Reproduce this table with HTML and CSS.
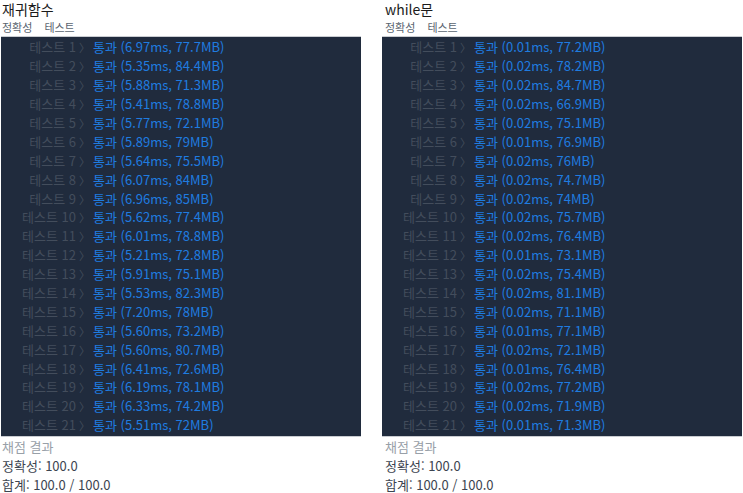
FILE: index.html
```html
<!DOCTYPE html>
<html lang="ko">
<head>
<meta charset="utf-8">
<link rel="stylesheet" href="styles.css">
</head>
<body>
<div class="page">
  <section class="col">
    <h1 class="title">재귀함수</h1>
    <div class="tabs"><span>정확성</span><span>테스트</span></div>
    <div class="console">
      <div class="row"><span class="lbl">테스트 1</span><span class="chev">〉</span><span class="pass">통과 (6.97ms, 77.7MB)</span></div>
      <div class="row"><span class="lbl">테스트 2</span><span class="chev">〉</span><span class="pass">통과 (5.35ms, 84.4MB)</span></div>
      <div class="row"><span class="lbl">테스트 3</span><span class="chev">〉</span><span class="pass">통과 (5.88ms, 71.3MB)</span></div>
      <div class="row"><span class="lbl">테스트 4</span><span class="chev">〉</span><span class="pass">통과 (5.41ms, 78.8MB)</span></div>
      <div class="row"><span class="lbl">테스트 5</span><span class="chev">〉</span><span class="pass">통과 (5.77ms, 72.1MB)</span></div>
      <div class="row"><span class="lbl">테스트 6</span><span class="chev">〉</span><span class="pass">통과 (5.89ms, 79MB)</span></div>
      <div class="row"><span class="lbl">테스트 7</span><span class="chev">〉</span><span class="pass">통과 (5.64ms, 75.5MB)</span></div>
      <div class="row"><span class="lbl">테스트 8</span><span class="chev">〉</span><span class="pass">통과 (6.07ms, 84MB)</span></div>
      <div class="row"><span class="lbl">테스트 9</span><span class="chev">〉</span><span class="pass">통과 (6.96ms, 85MB)</span></div>
      <div class="row"><span class="lbl">테스트 10</span><span class="chev">〉</span><span class="pass">통과 (5.62ms, 77.4MB)</span></div>
      <div class="row"><span class="lbl">테스트 11</span><span class="chev">〉</span><span class="pass">통과 (6.01ms, 78.8MB)</span></div>
      <div class="row"><span class="lbl">테스트 12</span><span class="chev">〉</span><span class="pass">통과 (5.21ms, 72.8MB)</span></div>
      <div class="row"><span class="lbl">테스트 13</span><span class="chev">〉</span><span class="pass">통과 (5.91ms, 75.1MB)</span></div>
      <div class="row"><span class="lbl">테스트 14</span><span class="chev">〉</span><span class="pass">통과 (5.53ms, 82.3MB)</span></div>
      <div class="row"><span class="lbl">테스트 15</span><span class="chev">〉</span><span class="pass">통과 (7.20ms, 78MB)</span></div>
      <div class="row"><span class="lbl">테스트 16</span><span class="chev">〉</span><span class="pass">통과 (5.60ms, 73.2MB)</span></div>
      <div class="row"><span class="lbl">테스트 17</span><span class="chev">〉</span><span class="pass">통과 (5.60ms, 80.7MB)</span></div>
      <div class="row"><span class="lbl">테스트 18</span><span class="chev">〉</span><span class="pass">통과 (6.41ms, 72.6MB)</span></div>
      <div class="row"><span class="lbl">테스트 19</span><span class="chev">〉</span><span class="pass">통과 (6.19ms, 78.1MB)</span></div>
      <div class="row"><span class="lbl">테스트 20</span><span class="chev">〉</span><span class="pass">통과 (6.33ms, 74.2MB)</span></div>
      <div class="row"><span class="lbl">테스트 21</span><span class="chev">〉</span><span class="pass">통과 (5.51ms, 72MB)</span></div>
    </div>
    <div class="result">
      <p class="res-head">채점 결과</p>
      <p>정확성: 100.0</p>
      <p>합계: 100.0 / 100.0</p>
    </div>
  </section>
  <section class="col col-right">
    <h1 class="title">while문</h1>
    <div class="tabs"><span>정확성</span><span>테스트</span></div>
    <div class="console">
      <div class="row"><span class="lbl">테스트 1</span><span class="chev">〉</span><span class="pass">통과 (0.01ms, 77.2MB)</span></div>
      <div class="row"><span class="lbl">테스트 2</span><span class="chev">〉</span><span class="pass">통과 (0.02ms, 78.2MB)</span></div>
      <div class="row"><span class="lbl">테스트 3</span><span class="chev">〉</span><span class="pass">통과 (0.02ms, 84.7MB)</span></div>
      <div class="row"><span class="lbl">테스트 4</span><span class="chev">〉</span><span class="pass">통과 (0.02ms, 66.9MB)</span></div>
      <div class="row"><span class="lbl">테스트 5</span><span class="chev">〉</span><span class="pass">통과 (0.02ms, 75.1MB)</span></div>
      <div class="row"><span class="lbl">테스트 6</span><span class="chev">〉</span><span class="pass">통과 (0.01ms, 76.9MB)</span></div>
      <div class="row"><span class="lbl">테스트 7</span><span class="chev">〉</span><span class="pass">통과 (0.02ms, 76MB)</span></div>
      <div class="row"><span class="lbl">테스트 8</span><span class="chev">〉</span><span class="pass">통과 (0.02ms, 74.7MB)</span></div>
      <div class="row"><span class="lbl">테스트 9</span><span class="chev">〉</span><span class="pass">통과 (0.02ms, 74MB)</span></div>
      <div class="row"><span class="lbl">테스트 10</span><span class="chev">〉</span><span class="pass">통과 (0.02ms, 75.7MB)</span></div>
      <div class="row"><span class="lbl">테스트 11</span><span class="chev">〉</span><span class="pass">통과 (0.02ms, 76.4MB)</span></div>
      <div class="row"><span class="lbl">테스트 12</span><span class="chev">〉</span><span class="pass">통과 (0.01ms, 73.1MB)</span></div>
      <div class="row"><span class="lbl">테스트 13</span><span class="chev">〉</span><span class="pass">통과 (0.02ms, 75.4MB)</span></div>
      <div class="row"><span class="lbl">테스트 14</span><span class="chev">〉</span><span class="pass">통과 (0.02ms, 81.1MB)</span></div>
      <div class="row"><span class="lbl">테스트 15</span><span class="chev">〉</span><span class="pass">통과 (0.02ms, 71.1MB)</span></div>
      <div class="row"><span class="lbl">테스트 16</span><span class="chev">〉</span><span class="pass">통과 (0.01ms, 77.1MB)</span></div>
      <div class="row"><span class="lbl">테스트 17</span><span class="chev">〉</span><span class="pass">통과 (0.02ms, 72.1MB)</span></div>
      <div class="row"><span class="lbl">테스트 18</span><span class="chev">〉</span><span class="pass">통과 (0.01ms, 76.4MB)</span></div>
      <div class="row"><span class="lbl">테스트 19</span><span class="chev">〉</span><span class="pass">통과 (0.02ms, 77.2MB)</span></div>
      <div class="row"><span class="lbl">테스트 20</span><span class="chev">〉</span><span class="pass">통과 (0.02ms, 71.9MB)</span></div>
      <div class="row"><span class="lbl">테스트 21</span><span class="chev">〉</span><span class="pass">통과 (0.01ms, 71.3MB)</span></div>
    </div>
    <div class="result">
      <p class="res-head">채점 결과</p>
      <p>정확성: 100.0</p>
      <p>합계: 100.0 / 100.0</p>
    </div>
  </section>
</div>
</body>
</html>
```
FILE: styles.css
```css
html, body {
  margin: 0;
  padding: 0;
  background: #ffffff;
}
body {
  font-family: "Noto Sans CJK KR", "Noto Sans", sans-serif;
  color: #333a44;
}
.page {
  display: flex;
  gap: 21px;
  padding-left: 1px;
}
.col {
  width: 360px;
  display: flex;
  flex-direction: column;
}
.title {
  margin: 0;
  padding-left: 1px;
  font-size: 14px;
  font-weight: 400;
  line-height: 18px;
  height: 19px;
  color: #1b1b1b;
}
.col-right .title,
.col-right .tabs,
.col-right .result {
  padding-left: 3px;
}
.tabs {
  display: flex;
  gap: 12px;
  font-size: 11px;
  line-height: 16px;
  height: 17px;
  padding-left: 1px;
  color: #596470;
}
.console {
  background: #202b3d;
  border-top: 1px solid #c9ccd1;
  border-bottom: 1px solid #c9ccd1;
  padding: 1px 0;
}
.row {
  display: flex;
  align-items: center;
  height: 18.9px;
  font-size: 13px;
  line-height: 18px;
  white-space: nowrap;
}
.lbl {
  width: 75px;
  text-align: right;
  color: #434d5c;
}
.chev {
  width: 17px;
  text-align: center;
  color: #434d5c;
  font-size: 11px;
}
.pass {
  color: #1f7ce0;
}
.result {
  padding-left: 1px;
  font-size: 13px;
  line-height: 19px;
  color: #3c4450;
}
.result p {
  margin: 0;
}
.res-head {
  color: #98a0a8;
}
```
